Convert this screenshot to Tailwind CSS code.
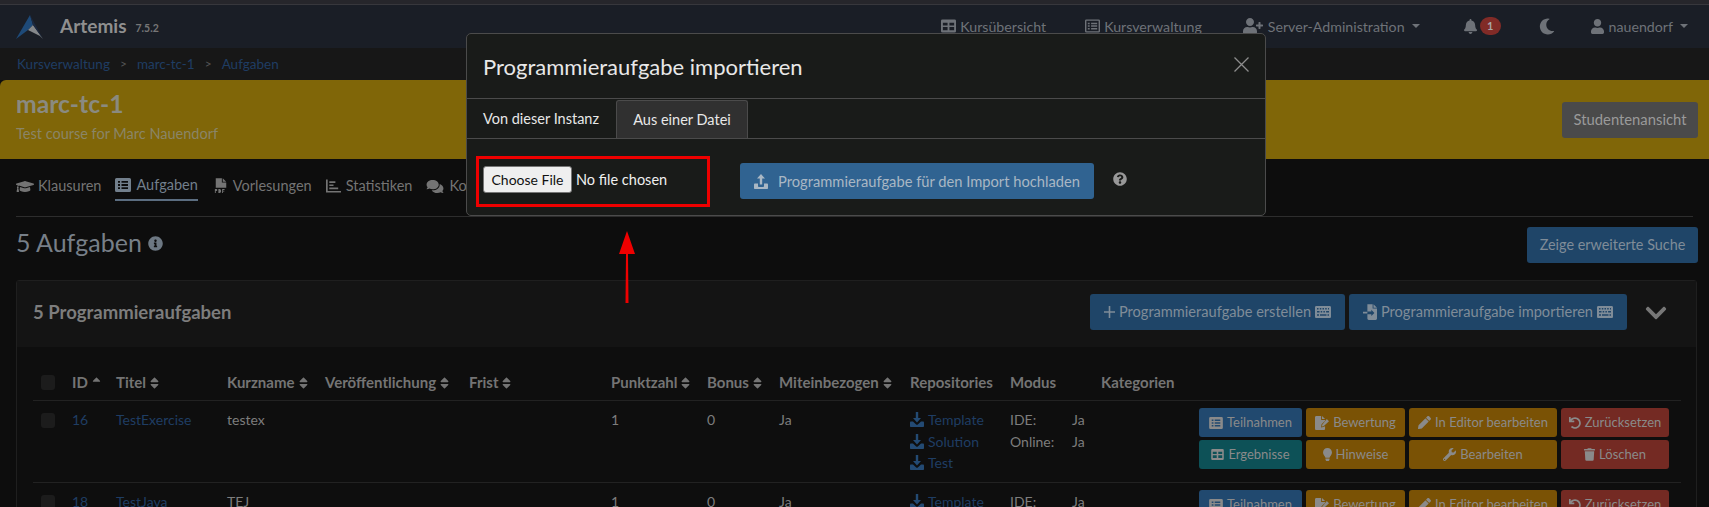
<!DOCTYPE html>
<html lang="de"><head><meta charset="utf-8"><title>Artemis</title>
<script src="https://cdn.jsdelivr.net/npm/@tailwindcss/browser@4"></script></head>
<body class="relative w-[1709px] h-[507px] overflow-hidden bg-[#0d0d0d] font-['Lato','Noto_Sans',sans-serif] text-[14px] text-[#8c8c8c]">
<svg class="absolute w-0 h-0" aria-hidden="true"><defs>
<symbol id="user" viewBox="0 0 448 512"><path d="M224 256c70.7 0 128-57.3 128-128S294.7 0 224 0 96 57.3 96 128s57.3 128 128 128zm89.6 32h-16.7c-22.2 10.2-46.9 16-72.9 16s-50.6-5.8-72.9-16h-16.7C60.2 288 0 348.2 0 422.4V464c0 26.5 21.5 48 48 48h352c26.5 0 48-21.5 48-48v-41.6c0-74.2-60.2-134.4-134.4-134.4z"/></symbol>
<symbol id="userplus" viewBox="0 0 640 512"><path d="M624 208h-64v-64c0-8.8-7.2-16-16-16h-32c-8.8 0-16 7.2-16 16v64h-64c-8.8 0-16 7.2-16 16v32c0 8.800 7.200 16 16 16h64v64c0 8.800 7.200 16 16 16h32c8.800 0 16-7.200 16-16v-64h64c8.800 0 16-7.200 16-16v-32c0-8.800-7.200-16-16-16zm-400 48c70.700 0 128-57.300 128-128S294.700 0 224 0 96 57.300 96 128s57.300 128 128 128zm89.600 32h-16.700c-22.200 10.200-46.900 16-72.900 16s-50.600-5.800-72.900-16h-16.700C60.200 288 0 348.200 0 422.400V464c0 26.500 21.500 48 48 48h352c26.500 0 48-21.500 48-48v-41.600c0-74.200-60.200-134.400-134.400-134.400z"/></symbol>
<symbol id="bell" viewBox="0 0 448 512"><path d="M224 512c35.320 0 63.970-28.650 63.970-64H160.030c0 35.350 28.650 64 63.970 64zm215.390-149.710c-19.320-20.760-55.470-51.990-55.470-154.290 0-77.700-54.480-139.900-127.940-155.160V32c0-17.670-14.320-32-31.980-32s-31.980 14.330-31.980 32v20.840C118.560 68.100 64.080 130.300 64.080 208c0 102.300-36.150 133.530-55.470 154.290-6 6.450-8.660 14.160-8.610 21.710.11 16.400 12.980 32 32.100 32h383.800c19.120 0 32-15.600 32.100-32 .05-7.550-2.610-15.270-8.610-21.710z"/></symbol>
<symbol id="moon" viewBox="0 0 512 512"><path d="M283.211 512c78.962 0 151.079-35.925 198.857-94.792 7.068-8.708-.639-21.430-11.562-19.350-124.203 23.654-238.262-71.576-238.262-196.954 0-72.222 38.662-138.635 101.498-174.394 9.686-5.512 7.250-20.197-3.756-22.230A258.156 258.156 0 0 0 283.211 0c-141.309 0-256 114.511-256 256 0 141.309 114.511 256 256 256z"/></symbol>
<symbol id="info" viewBox="0 0 512 512"><path d="M256 8C119.043 8 8 119.083 8 256c0 136.997 111.043 248 248 248s248-111.003 248-248C504 119.083 392.957 8 256 8zm0 110c23.196 0 42 18.804 42 42s-18.804 42-42 42-42-18.804-42-42 18.804-42 42-42zm56 254c0 6.627-5.373 12-12 12h-88c-6.627 0-12-5.373-12-12v-24c0-6.627 5.373-12 12-12h12v-64h-12c-6.627 0-12-5.373-12-12v-24c0-6.627 5.373-12 12-12h64c6.627 0 12 5.373 12 12v100h12c6.627 0 12 5.373 12 12v24z"/></symbol>
<symbol id="question" viewBox="0 0 512 512"><path d="M504 256c0 136.997-111.043 248-248 248S8 392.997 8 256C8 119.083 119.043 8 256 8s248 111.083 248 248zM262.655 90c-54.497 0-89.255 22.957-116.549 63.758-3.536 5.286-2.353 12.415 2.715 16.258l34.699 26.310c5.205 3.947 12.621 3.008 16.665-2.122 17.864-22.658 30.113-35.797 57.303-35.797 20.429 0 45.698 13.148 45.698 32.958 0 14.976-12.363 22.667-32.534 33.976C247.128 238.528 216 254.941 216 296v4c0 6.627 5.373 12 12 12h56c6.627 0 12-5.373 12-12v-1.333c0-28.462 83.186-29.647 83.186-106.667 0-58.002-60.165-102-116.531-102zM256 338c-25.365 0-46 20.635-46 46 0 25.364 20.635 46 46 46s46-20.636 46-46c0-25.365-20.635-46-46-46z"/></symbol>
<symbol id="chevron" viewBox="0 0 448 512"><path d="M207.029 381.476L12.686 187.132c-9.373-9.373-9.373-24.569 0-33.941l22.667-22.667c9.357-9.357 24.522-9.375 33.901-.04L224 284.505l154.745-154.021c9.379-9.335 24.544-9.317 33.901.04l22.667 22.667c9.373 9.373 9.373 24.569 0 33.941L240.971 381.476c-9.373 9.372-24.569 9.372-33.942 0z"/></symbol>
<symbol id="trash" viewBox="0 0 448 512"><path d="M432 32H312l-9.400-18.700A24 24 0 0 0 281.100 0H166.800a23.720 23.720 0 0 0-21.400 13.300L136 32H16A16 16 0 0 0 0 48v32a16 16 0 0 0 16 16h416a16 16 0 0 0 16-16V48a16 16 0 0 0-16-16zM53.200 467a48 48 0 0 0 47.900 45h245.800a48 48 0 0 0 47.900-45L416 128H32z"/></symbol>
<symbol id="wrench" viewBox="0 0 512 512"><path d="M507.730 109.100c-2.240-9.030-13.540-12.090-20.120-5.510l-74.360 74.360-67.880-11.310-11.310-67.880 74.360-74.360c6.620-6.620 3.430-17.900-5.660-20.160-47.380-11.740-99.550.91-136.580 37.930-39.640 39.640-50.550 97.100-34.050 147.200L18.740 402.760c-24.990 24.990-24.990 65.510 0 90.500 24.990 24.990 65.510 24.990 90.500 0l213.210-213.210c50.120 16.710 107.470 5.680 147.370-34.220 37.070-37.070 49.700-89.320 37.910-136.730zM64 472c-13.250 0-24-10.750-24-24 0-13.260 10.750-24 24-24s24 10.740 24 24c0 13.250-10.750 24-24 24z"/></symbol>
<symbol id="pencil" viewBox="0 0 512 512"><path d="M497.900 142.100l-46.100 46.100c-4.700 4.700-12.300 4.700-17 0l-111-111c-4.700-4.700-4.700-12.300 0-17l46.100-46.100c18.700-18.700 49.100-18.700 67.900 0l60.100 60.100c18.800 18.700 18.800 49.100 0 67.900zM284.200 99.800L21.600 362.400.4 483.900c-2.900 16.400 11.400 30.600 27.800 27.800l121.500-21.300 262.600-262.600c4.700-4.700 4.700-12.300 0-17l-111-111c-4.800-4.700-12.400-4.700-17.100 0z"/></symbol>
<symbol id="bulb" viewBox="0 0 352 512"><path d="M96.060 454.350c.01 6.290 1.870 12.450 5.360 17.690l17.090 25.690a31.990 31.990 0 0 0 26.640 14.280h61.710a31.990 31.990 0 0 0 26.640-14.280l17.090-25.690a31.989 31.989 0 0 0 5.360-17.690l.04-38.350H96.010l.05 38.350zM0 176c0 44.370 16.450 84.850 43.560 115.780 16.520 18.850 42.360 58.230 52.210 91.450.04.26.07.52.11.78h160.240c.04-.26.07-.51.11-.78 9.850-33.220 35.690-72.600 52.210-91.450C335.550 260.850 352 220.370 352 176 352 78.610 272.910-.3 175.450 0 73.440.31 0 82.970 0 176z"/></symbol>
<symbol id="undo" viewBox="0 0 512 512"><path d="M212.333 224.333H12c-6.627 0-12-5.373-12-12V12C0 5.373 5.373 0 12 0h48c6.627 0 12 5.373 12 12v78.112C117.773 39.279 184.260 7.470 258.175 8.007c136.906.994 246.448 111.623 246.157 248.532C504.041 393.258 393.120 504 256.333 504c-64.089 0-122.496-24.313-166.510-64.215-5.099-4.622-5.334-12.554-.467-17.420l33.967-33.967c4.474-4.474 11.662-4.717 16.401-.525C170.760 415.336 211.580 432 256.333 432c97.268 0 176-78.716 176-176 0-97.267-78.716-176-176-176-58.496 0-110.280 28.476-142.274 72.333h98.274c6.627 0 12 5.373 12 12v48c0 6.627-5.373 12-12 12z"/></symbol>
<symbol id="sort" viewBox="0 0 320 512"><path d="M41 288h238c21.400 0 32.100 25.900 17 41L177 448c-9.400 9.400-24.600 9.400-33.900 0L24 329c-15.100-15.100-4.400-41 17-41zm255-105L177 64c-9.400-9.400-24.600-9.400-33.900 0L24 183c-15.100 15.100-4.400 41 17 41h238c21.400 0 32.100-25.900 17-41z"/></symbol>
<symbol id="sortup" viewBox="0 0 320 512"><path d="M279 224H41c-21.400 0-32.100-25.900-17-41L143 64c9.400-9.400 24.600-9.400 33.900 0l119 119c15.200 15.100 4.500 41-16.900 41z"/></symbol>
<symbol id="cap" viewBox="0 0 640 512"><path d="M622.340 153.200L343.400 67.500c-15.200-4.670-31.600-4.670-46.790 0L17.660 153.200c-23.540 7.230-23.540 38.360 0 45.590l48.630 14.940c-10.670 13.190-17.230 29.280-17.880 46.900C38.780 266.150 32 276.110 32 288c0 10.780 5.680 19.850 13.860 25.650L20.330 428.530C18.110 438.520 25.710 448 35.940 448h56.110c10.240 0 17.840-9.480 15.620-19.470L82.140 313.650C90.320 307.850 96 298.780 96 288c0-11.570-6.470-21.250-15.660-26.870.76-15.020 8.440-28.300 20.690-36.720L296.600 284.500c9.060 2.780 26.440 6.250 46.790 0l278.950-85.700c23.550-7.240 23.550-38.360 0-45.600zM352.790 315.090c-28.530 8.760-52.840 3.920-65.590 0l-145.020-44.550L128 384c0 35.350 85.960 64 192 64s192-28.650 192-64l-14.180-113.470-145.030 44.560z"/></symbol>
<symbol id="comments" viewBox="0 0 576 512"><path d="M416 192c0-88.400-93.100-160-208-160S0 103.600 0 192c0 34.300 14.100 65.900 38 92-13.400 30.200-35.500 54.200-35.800 54.500-2.200 2.300-2.800 5.700-1.500 8.700S4.800 352 8 352c36.600 0 66.900-12.300 88.700-25 32.200 15.700 70.300 25 111.300 25 114.900 0 208-71.600 208-160zm122 220c23.900-26 38-57.700 38-92 0-66.900-53.500-124.200-129.300-148.100.9 6.600 1.300 13.300 1.300 20.100 0 105.900-107.700 192-240 192-10.800 0-21.300-.8-31.700-1.900C207.800 439.600 281.800 480 368 480c41 0 79.100-9.200 111.300-25 21.800 12.700 52.100 25 88.700 25 3.200 0 6.100-1.900 7.300-4.800 1.300-2.900.7-6.300-1.500-8.700-.3-.3-22.400-24.200-35.800-54.500z"/></symbol>
<symbol id="listalt" viewBox="0 0 16 14"><path fill-rule="evenodd" d="M1.500 0h13A1.500 1.500 0 0 1 16 1.500v11a1.500 1.500 0 0 1-1.500 1.500h-13A1.500 1.500 0 0 1 0 12.500v-11A1.500 1.500 0 0 1 1.500 0zM3 3v1.800h2V3zm0 3.100v1.800h2V6.100zm0 3.100V11h2V9.200zM6.500 3v1.800H13V3zm0 3.100v1.800H13V6.100zm0 3.100V11H13V9.200z"/></symbol>
<symbol id="listline" viewBox="0 0 16 14"><path fill-rule="evenodd" d="M1.500 0h13A1.500 1.500 0 0 1 16 1.500v11a1.500 1.500 0 0 1-1.500 1.500h-13A1.500 1.500 0 0 1 0 12.500v-11A1.500 1.500 0 0 1 1.500 0zM1.500 1.500v11h13v-11zM3 3.500h2V5H3zm0 2.800h2v1.500H3zm0 2.800h2v1.500H3zm3.500-5.600h6.500V5H6.500zm0 2.800h6.500v1.500H6.500zm0 2.800h6.500v1.500H6.500z"/></symbol>
<symbol id="table" viewBox="0 0 16 14"><path fill-rule="evenodd" d="M1.500 0h13A1.500 1.500 0 0 1 16 1.500v11a1.500 1.500 0 0 1-1.500 1.500h-13A1.500 1.500 0 0 1 0 12.500v-11A1.500 1.500 0 0 1 1.500 0zM2 3.500v3h5v-3zm7 0v3h5v-3zM2 8v3.500h5V8zm7 0v3.500h5V8z"/></symbol>
<symbol id="pdf" viewBox="0 0 16 18"><path d="M2 0h7v5h5v6H2zM10 0l4 4h-4z"/><path d="M1 12.500h1.600c.8 0 1.200.5 1.200 1.100s-.4 1.100-1.200 1.100h-.6V17H1zM5 12.500h1.400c1.100 0 1.700.9 1.700 2.200S7.500 17 6.400 17H5zM9.300 12.500h2.800v1H10.300v.9h1.500v1H10.300V17h-1z"/></symbol>
<symbol id="chart" viewBox="0 0 16 14"><path d="M0 0h1.800v12.200H16V14H0zM3.500 2H10v1.800H3.500zM3.500 5.300H8v1.800H3.500zM3.500 8.600H13v1.800H3.500z"/></symbol>
<symbol id="download" viewBox="0 0 14 15"><path d="M5.800 0h2.400v6H11L7 10.500 3 6h2.800zM1 9.500l2 0 3.200 3c.5.400 1.100.400 1.600 0l3.200-3h2c.6 0 1 .5 1 1V14c0 .6-.4 1-1 1H1c-.6 0-1-.4-1-1v-3.500c0-.5.400-1 1-1z"/></symbol>
<symbol id="upload" viewBox="0 0 14 15"><path d="M5.800 10.500h2.400V4.500H11L7 0 3 4.500h2.800zM1 9.500h3v2.500c0 .5.400 1 1 1h4c.6 0 1-.5 1-1V9.500h3c.6 0 1 .5 1 1V14c0 .6-.4 1-1 1H1c-.6 0-1-.4-1-1v-3.500c0-.5.400-1 1-1z"/></symbol>
<symbol id="keyboard" viewBox="0 0 16 12"><path fill-rule="evenodd" d="M1.300 0h13.400c.7 0 1.300.6 1.300 1.300v9.400c0 .7-.6 1.300-1.300 1.300H1.300C.6 12 0 11.400 0 10.700V1.300C0 .6.600 0 1.300 0zM2 2v1.500h1.500V2zm2.800 0v1.500h1.500V2zm2.700 0v1.500H9V2zm2.700 0v1.500h1.500V2zM13 2v1.500h1V2zM2 5v1.500h2.500V5zm3.700 0v1.500h1.500V5zm2.700 0v1.500h1.500V5zm2.700 0v1.500H14V5zM2 8.300v1.500h2V8.300zm3 0v1.500h6.500V8.300zm7.500 0v1.500H14V8.300z"/></symbol>
<symbol id="fileimport" viewBox="0 0 16 18"><path d="M5 0h6v5h5v11.500c0 .8-.7 1.500-1.500 1.500h-8C5.700 18 5 17.300 5 16.500V11.500h4.500V13.500L13 10 9.500 6.500V8.500H5zM12 0l4 4h-4zM0 8.800h5v2H0z"/></symbol>
<symbol id="signature" viewBox="0 0 16 16"><path d="M1.500 0H7v4.500h4.500v1L7.500 9.500 7 13l3.500-.6 1-1v3.100c0 .8-.7 1.500-1.500 1.500H1.500C.7 16 0 15.300 0 14.500v-13C0 .7.700 0 1.500 0zM8 0l3.500 3.500H8zM13.500 3.500 16 6 9.800 11.800l-1.900.3.300-2z"/></symbol>
</defs></svg>

<div class="h-[5px] bg-[#26262b] border-b border-[#37373c]"></div>

<nav class="h-[43px] bg-[#1a1e26] flex items-center pl-4 pr-[21px] text-[#6e7278]">
  <svg class="w-[28px] h-[24px] mr-4" viewBox="0 0 28 24" aria-label="Artemis Logo"><path d="M14 0 0 24 12 15 17 10z" fill="#1e4a78"/><path d="M17 10 12 15l12 6 3 3z" fill="#85888b"/><path d="M14 0l3 10 10 14z" fill="#1c2940"/></svg>
  <span class="font-bold text-[19px] text-[#8f8f8f]">Artemis</span>
  <span class="font-bold text-[10.500px] text-[#767676] ml-[9px] mt-1">7.5.2</span>
  <div class="ml-auto flex items-center text-[14.200px]">
    <svg class="w-[15px] h-[14px] fill-current mr-1"><use href="#table"/></svg><span>Kursübersicht</span>
    <svg class="w-[15px] h-[14px] fill-current ml-[39px] mr-1"><use href="#listline"/></svg><span>Kursverwaltung</span>
    <svg class="w-[22px] h-[16px] fill-current ml-10"><use href="#userplus"/></svg><span class="ml-1">Server-Administration</span><span class="ml-[7px] w-0 h-0 border-x-[4px] border-x-transparent border-t-[4.500px] border-t-current"></span>
    <svg class="w-[13px] h-[15px] fill-current ml-11"><use href="#bell"/></svg><span class="ml-[3px] w-[21px] h-[18px] rounded-full bg-[#812b27] text-[#a8a8a8] font-bold text-[11px] flex items-center justify-center">1</span>
    <svg class="w-[16px] h-[17px] fill-current ml-[38px]"><use href="#moon"/></svg>
    <svg class="w-[13px] h-[15px] fill-current ml-[36px]"><use href="#user"/></svg><span class="ml-[5px]">nauendorf</span><span class="ml-[7px] w-0 h-0 border-x-[4px] border-x-transparent border-t-[4.500px] border-t-current"></span>
  </div>
</nav>

<div class="h-[32px] bg-[#171717] flex items-center pl-[17px] text-[13.500px] text-[#1f3d63]">
  <span>Kursverwaltung</span><span class="mx-[10px] text-[#555] text-[12px]">&gt;</span><span>marc-tc-1</span><span class="mx-[10px] text-[#555] text-[12px]">&gt;</span><span>Aufgaben</span>
</div>

<header class="h-[79px] bg-[#806608] rounded-tl-md flex items-center justify-between pl-4 pr-[11px]">
  <div class="-mt-[7px]">
    <h1 class="font-bold text-[24.700px] leading-[30px] text-[#8a8a80]">marc-tc-1</h1>
    <p class="text-[14.500px] mt-[5px] leading-5 text-[#8a8567]">Test course for Marc Nauendorf</p>
  </div>
  <button class="w-[136px] h-[36px] rounded-[3px] bg-[#4a4a4a] text-[14.800px] text-[#9a9a9a]">Studentenansicht</button>
</header>

<div class="mx-4 h-[58px] border-b border-[#2d2d2d] flex items-start pt-[15px] text-[14.500px] text-[#747474]">
  <div class="flex items-center h-[24px]"><svg class="w-[18px] h-[15px] fill-current mr-[4px]"><use href="#cap"/></svg>Klausuren</div>
  <div class="flex items-center h-[27px] ml-[14px] pb-[3px] border-b-2 border-[#5b6d80] text-[#727f8c]"><svg class="w-[16px] h-[14px] fill-current mr-[5px]"><use href="#listalt"/></svg>Aufgaben</div>
  <div class="flex items-center h-[24px] ml-4"><svg class="w-[14px] h-[16px] fill-current mr-[5px]"><use href="#pdf"/></svg>Vorlesungen</div>
  <div class="flex items-center h-[24px] ml-[14px]"><svg class="w-[15px] h-[14px] fill-current mr-[5px]"><use href="#chart"/></svg>Statistiken</div>
  <div class="flex items-center h-[24px] ml-[14px]"><svg class="w-[18px] h-[15px] fill-current mr-[5px]"><use href="#comments"/></svg>Kommunikation</div>
</div>

<div class="h-[63px] pl-[16px] pr-[11px] flex items-start justify-between">
  <div class="flex items-center h-[52px]"><h2 class="text-[25px] text-[#777f88]">5 Aufgaben</h2><svg class="w-[15px] h-[15px] fill-[#6d7883] ml-[6px] mt-px"><use href="#info"/></svg></div>
  <button class="mt-[10px] w-[171px] h-[36px] rounded-[3px] bg-[#1f4568] text-[14.400px] text-[#7f8c98]">Zeige erweiterte Suche</button>
</div>

<section class="ml-4 w-[1681px] border border-[#1f1f1f] rounded-t-[3px] bg-[#0e0e0e]">
  <div class="h-[66px] bg-[#141414] flex items-center pl-4 pb-[4px]">
    <span class="font-bold text-[18.500px] mt-[2px] text-[#7d7d7d]">5 Programmieraufgaben</span>
    <div class="ml-auto flex items-center gap-1 mr-[69px] text-[#7f8c98] text-[14.600px]">
      <button class="w-[255px] h-[36px] rounded-[3px] bg-[#1f4568] flex items-center justify-center gap-1"><svg class="w-[11px] h-[12px]" viewBox="0 0 11 12"><path d="M4.700 0h1.600v5.200H11v1.600H6.300V12H4.700V6.800H0V5.200h4.700z" fill="currentColor"/></svg>Programmieraufgabe erstellen<svg class="w-[16px] h-[12px] fill-current"><use href="#keyboard"/></svg></button>
      <button class="w-[278px] h-[36px] rounded-[3px] bg-[#1f4568] flex items-center justify-center gap-1"><svg class="w-[14px] h-[16px] fill-current"><use href="#fileimport"/></svg>Programmieraufgabe importieren<svg class="w-[16px] h-[12px] fill-current"><use href="#keyboard"/></svg></button>
    </div>
    <svg class="absolute left-[1644px] top-[301px] w-[24px] h-[24px] fill-[#777]"><use href="#chevron"/></svg>
  </div>

  <div class="mx-4 w-[1648px]">
    <div class="h-[54px] pt-[18px] pl-2 border-b border-[#222] grid grid-cols-[31px_44px_111px_98px_144px_142px_96px_72px_131px_100px_91px_98px] items-center font-bold text-[15px] text-[#747474]">
      <span class="w-[14px] h-[15px] rounded-[3px] bg-[#1c1c1c]"></span>
      <span class="flex items-center gap-[4px]">ID<svg class="w-[9px] h-[13px] fill-current"><use href="#sortup"/></svg></span>
      <span class="flex items-center gap-[4px]">Titel<svg class="w-[9px] h-[14px] fill-current"><use href="#sort"/></svg></span>
      <span class="flex items-center gap-[4px]">Kurzname<svg class="w-[9px] h-[14px] fill-current"><use href="#sort"/></svg></span>
      <span class="flex items-center gap-[4px]">Veröffentlichung<svg class="w-[9px] h-[14px] fill-current"><use href="#sort"/></svg></span>
      <span class="flex items-center gap-[4px]">Frist<svg class="w-[9px] h-[14px] fill-current"><use href="#sort"/></svg></span>
      <span class="flex items-center gap-[4px]">Punktzahl<svg class="w-[9px] h-[14px] fill-current"><use href="#sort"/></svg></span>
      <span class="flex items-center gap-[4px]">Bonus<svg class="w-[9px] h-[14px] fill-current"><use href="#sort"/></svg></span>
      <span class="flex items-center gap-[4px]">Miteinbezogen<svg class="w-[9px] h-[14px] fill-current"><use href="#sort"/></svg></span>
      <span>Repositories</span><span>Modus</span><span>Kategorien</span>
    </div>

    <div class="h-[82px] pl-2 pt-[8px] border-b border-[#222] grid grid-cols-[31px_44px_111px_98px_144px_142px_96px_72px_131px_100px_91px_98px_auto] items-start leading-[21.500px] text-[#7d7d7d]">
      <span class="w-[14px] h-[15px] mt-[4px] rounded-[3px] bg-[#1c1c1c]"></span>
      <span class="text-[#1f3d63]">16</span><span class="text-[#1f3d63]">TestExercise</span><span>testex</span><span></span><span></span><span>1</span><span>0</span><span>Ja</span>
      <div class="text-[#1f3d63]">
        <div class="flex items-center gap-1"><svg class="w-[14px] h-[15px] fill-[#234a73]"><use href="#download"/></svg>Template</div>
        <div class="flex items-center gap-1"><svg class="w-[14px] h-[15px] fill-[#234a73]"><use href="#download"/></svg>Solution</div>
        <div class="flex items-center gap-1"><svg class="w-[14px] h-[15px] fill-[#234a73]"><use href="#download"/></svg>Test</div>
      </div>
      <div class="grid grid-cols-[62px_auto]"><span>IDE:</span><span>Ja</span><span>Online:</span><span>Ja</span></div>
      <span></span>
      <div class="col-start-13 -mt-px w-[471px] grid grid-cols-[103px_99px_148px_108px] gap-x-[4px] gap-y-[3px] text-[13px] text-[#8a8a8a]">
        <span class="h-[29px] rounded-[3px] bg-[#21496f] flex items-center justify-center gap-1"><svg class="w-[14px] h-[12px] fill-current"><use href="#listalt"/></svg>Teilnahmen</span>
        <span class="h-[29px] rounded-[3px] bg-[#7a5205] flex items-center justify-center gap-1"><svg class="w-[14px] h-[14px] fill-current"><use href="#signature"/></svg>Bewertung</span>
        <span class="h-[29px] rounded-[3px] bg-[#7a5205] flex items-center justify-center gap-1"><svg class="w-[13px] h-[13px] fill-current"><use href="#pencil"/></svg>In Editor bearbeiten</span>
        <span class="h-[29px] rounded-[3px] bg-[#742a23] flex items-center justify-center gap-1"><svg class="w-[12px] h-[12px] fill-current"><use href="#undo"/></svg>Zurücksetzen</span>
        <span class="h-[29px] rounded-[3px] bg-[#0d5157] flex items-center justify-center gap-1"><svg class="w-[13px] h-[11px] fill-current"><use href="#table"/></svg>Ergebnisse</span>
        <span class="h-[29px] rounded-[3px] bg-[#7a5205] flex items-center justify-center gap-1"><svg class="w-[9px] h-[13px] fill-current"><use href="#bulb"/></svg>Hinweise</span>
        <span class="h-[29px] rounded-[3px] bg-[#7a5205] flex items-center justify-center gap-1"><svg class="w-[13px] h-[13px] fill-current"><use href="#wrench"/></svg>Bearbeiten</span>
        <span class="h-[29px] rounded-[3px] bg-[#742a23] flex items-center justify-center gap-1"><svg class="w-[11px] h-[13px] fill-current"><use href="#trash"/></svg>Löschen</span>
      </div>
    </div>

    <div class="h-[40px] pl-2 pt-[8px] grid grid-cols-[31px_44px_111px_98px_144px_142px_96px_72px_131px_100px_91px_98px_auto] items-start leading-[21.500px] text-[#7d7d7d]">
      <span class="w-[14px] h-[15px] mt-[4px] rounded-[3px] bg-[#1c1c1c]"></span>
      <span class="text-[#1f3d63]">18</span><span class="text-[#1f3d63]">TestJava</span><span>TEJ</span><span></span><span></span><span>1</span><span>0</span><span>Ja</span>
      <div class="text-[#1f3d63]"><div class="flex items-center gap-1"><svg class="w-[14px] h-[15px] fill-[#234a73]"><use href="#download"/></svg>Template</div></div>
      <div class="grid grid-cols-[62px_auto]"><span>IDE:</span><span>Ja</span></div>
      <span></span>
      <div class="col-start-13 -mt-px w-[471px] grid grid-cols-[103px_99px_148px_108px] gap-x-[4px] text-[13px] text-[#8a8a8a]">
        <span class="h-[29px] rounded-[3px] bg-[#21496f] flex items-center justify-center gap-1"><svg class="w-[14px] h-[12px] fill-current"><use href="#listalt"/></svg>Teilnahmen</span>
        <span class="h-[29px] rounded-[3px] bg-[#7a5205] flex items-center justify-center gap-1"><svg class="w-[14px] h-[14px] fill-current"><use href="#signature"/></svg>Bewertung</span>
        <span class="h-[29px] rounded-[3px] bg-[#7a5205] flex items-center justify-center gap-1"><svg class="w-[13px] h-[13px] fill-current"><use href="#pencil"/></svg>In Editor bearbeiten</span>
        <span class="h-[29px] rounded-[3px] bg-[#742a23] flex items-center justify-center gap-1"><svg class="w-[12px] h-[12px] fill-current"><use href="#undo"/></svg>Zurücksetzen</span>
      </div>
    </div>
  </div>
</section>

<div role="dialog" class="absolute left-[466px] top-[33px] w-[800px] h-[183px] rounded-[5px] border border-[#4b4b4b] bg-[#191b19] flex flex-col text-[14.500px] text-[#e8e8e8]">
  <div class="h-[65px] shrink-0 border-b border-[#4b4b4b] flex items-center justify-between pl-4 pr-[16px]">
    <h3 class="text-[22px]">Programmieraufgabe importieren</h3>
    <svg class="w-[15px] h-[15px] stroke-[#8d8d8d] -mt-1" viewBox="0 0 15 15" fill="none" stroke-width="1.300"><path d="M0.500 0.500 14.500 14.500M14.500 0.500 0.500 14.500"/></svg>
  </div>
  <div class="h-[40px] shrink-0 border-b border-[#4b4b4b] flex items-stretch">
    <div class="w-[149px] pl-4 flex items-center">Von dieser Instanz</div>
    <div class="w-[132px] mt-px border-x border-t border-[#4b4b4b] rounded-t-[3px] bg-[#303030] flex items-center justify-center">Aus einer Datei</div>
  </div>
  <div class="relative flex-1 pl-4 flex items-start">
    <button class="mt-[27px] w-[89px] h-[27px] rounded-[3px] border border-[#767676] bg-[#efefef] text-[#111] text-[14px]">Choose File</button>
    <span class="mt-[31px] ml-[4px] w-[164px] leading-[19px] text-[#f0f0f0]">No file chosen</span>
    <button class="mt-[24px] w-[354px] h-[36px] rounded-[3px] bg-[#306391] text-[14.700px] text-[#a9b7c4] flex items-center justify-center gap-[10px]"><svg class="w-[14px] h-[15px] fill-current"><use href="#upload"/></svg>Programmieraufgabe für den Import hochladen</button>
    <svg class="w-[14px] h-[14px] fill-[#989898] mt-[33px] ml-[19px]"><use href="#question"/></svg>
  </div>
</div>

<div class="absolute left-[476px] top-[156px] w-[234px] h-[51px] border-[3px] border-[#ee0000]"></div>
<svg class="absolute left-[618px] top-[230px] w-[18px] h-[74px]" viewBox="0 0 18 74"><path d="M9 1 17 24H10L10.500 73H7.500L8 24H1z" fill="#ee0000"/></svg>
</body></html>
